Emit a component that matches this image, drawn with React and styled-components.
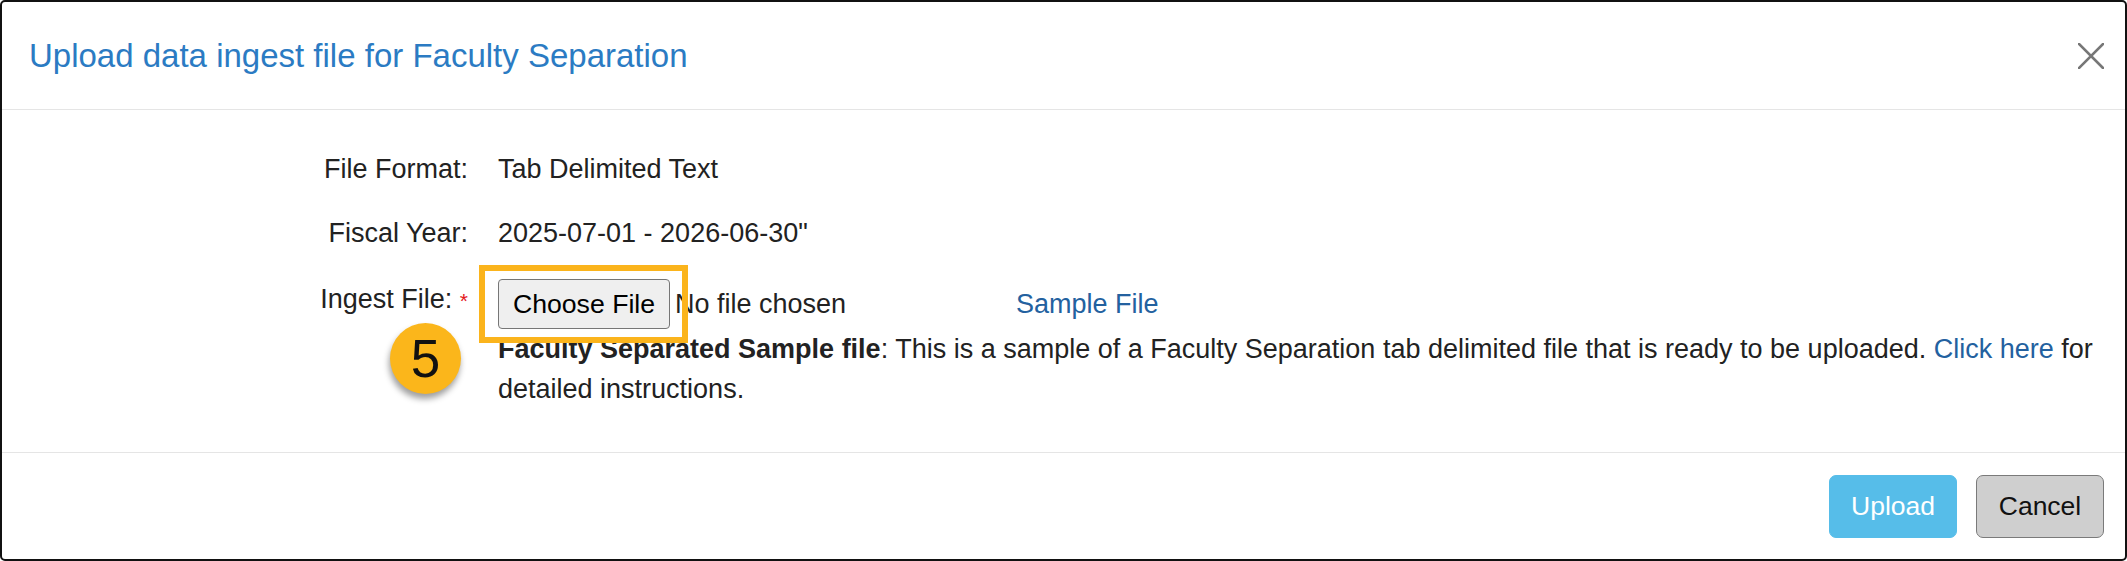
import React from 'react'
import styled, { createGlobalStyle } from 'styled-components'

const GlobalStyle = createGlobalStyle`
  html, body {
    margin: 0;
    padding: 0;
    background: #fff;
  }
  * {
    box-sizing: border-box;
  }
`;

const Modal = styled.div`
  width: 2127px;
  height: 561px;
  border: 2px solid #111;
  border-radius: 5px;
  background: #fff;
  display: flex;
  flex-direction: column;
  font-family: "Liberation Sans", Arial, sans-serif;
  color: #222;
  overflow: hidden;
`;

const Header = styled.div`
  height: 108px;
  flex-shrink: 0;
  display: flex;
  align-items: center;
  justify-content: space-between;
  padding: 0 21px 0 27px;
  border-bottom: 1px solid #e5e5e5;
`;

const Title = styled.h4`
  margin: 0;
  font-size: 33px;
  font-weight: normal;
  line-height: 1.2;
  color: #2b7bc3;
`;

const Close = styled.button`
  width: 26px;
  height: 26px;
  padding: 0;
  border: none;
  background: none;
  display: flex;
  cursor: pointer;
`;

const Body = styled.div`
  flex: 1;
  padding: 39px 16px 0 0;
  font-size: 27px;
  line-height: 40px;
`;

const Row = styled.div`
  display: grid;
  grid-template-columns: 466px 1fr;
  column-gap: 30px;
  margin-top: ${(p) => p.$top || 0}px;
`;

const Label = styled.div`
  position: relative;
  text-align: right;
`;

const Star = styled.span`
  color: #e3161b;
  font-size: 21px;
`;

const Badge = styled.div`
  position: absolute;
  right: 7px;
  top: 44px;
  width: 71px;
  height: 71px;
  border-radius: 50%;
  background: #fbb61b;
  box-shadow: -1px 5px 6px rgba(0, 0, 0, 0.38);
  display: flex;
  align-items: center;
  justify-content: center;
  font-size: 53px;
  line-height: 1;
  color: #111;
`;

const FileLine = styled.div`
  display: flex;
  align-items: center;
  height: 50px;
`;

const FilePicker = styled.div`
  position: relative;
  width: 518px;
  display: flex;
  align-items: center;
`;

const ChooseButton = styled.button`
  width: 172px;
  height: 50px;
  padding: 0;
  border: 1px solid #767676;
  border-radius: 4px;
  background: #efefef;
  font-family: inherit;
  font-size: 26.67px;
  color: #000;
`;

const NoFile = styled.span`
  margin-left: 5px;
`;

const Highlight = styled.div`
  position: absolute;
  left: -19px;
  top: -14px;
  width: 209px;
  height: 78px;
  border: 6px solid #fbb41c;
  pointer-events: none;
`;

const Link = styled.a`
  color: #23619f;
  text-decoration: none;
  cursor: pointer;
`;

const Note = styled.p`
  margin: 0;
`;

const Footer = styled.div`
  flex-shrink: 0;
  display: flex;
  justify-content: flex-end;
  gap: 19px;
  padding: 22px 21px 21px 0;
  border-top: 1px solid #e5e5e5;
`;

const Button = styled.button`
  width: 128px;
  height: 63px;
  border-radius: 7px;
  font-family: "Liberation Sans", Arial, sans-serif;
  font-size: 26.5px;
  cursor: pointer;
  border: 1px solid ${(p) => (p.$primary ? '#56bde9' : '#7a7a7a')};
  background: ${(p) => (p.$primary ? '#56bde9' : '#cfcfcf')};
  color: ${(p) => (p.$primary ? '#fff' : '#111')};
`;

const App = () => {
  return (
    <>
      <GlobalStyle />
      <Modal>
        <Header>
          <Title>Upload data ingest file for Faculty Separation</Title>
          <Close aria-label="Close">
            <svg width="26" height="26" viewBox="0 0 26 26">
              <path d="M1 1 L25 25 M25 1 L1 25" stroke="#777" strokeWidth="2.6" strokeLinecap="square" />
            </svg>
          </Close>
        </Header>

        <Body>
          <Row>
            <Label>File Format:</Label>
            <div>Tab Delimited Text</div>
          </Row>
          <Row $top={24}>
            <Label>Fiscal Year:</Label>
            <div>2025-07-01 - 2026-06-30"</div>
          </Row>
          <Row $top={26}>
            <Label>
              Ingest File: <Star>*</Star>
              <Badge>5</Badge>
            </Label>
            <div>
              <FileLine>
                <FilePicker>
                  <ChooseButton>Choose File</ChooseButton>
                  <NoFile>No file chosen</NoFile>
                  <Highlight />
                </FilePicker>
                <Link>Sample File</Link>
              </FileLine>
              <Note>
                <b>Faculty Separated Sample file</b>: This is a sample of a Faculty Separation tab
                delimited file that is ready to be uploaded. <Link>Click here</Link> for detailed
                instructions.
              </Note>
            </div>
          </Row>
        </Body>

        <Footer>
          <Button $primary>Upload</Button>
          <Button>Cancel</Button>
        </Footer>
      </Modal>
    </>
  )
}

export default App
